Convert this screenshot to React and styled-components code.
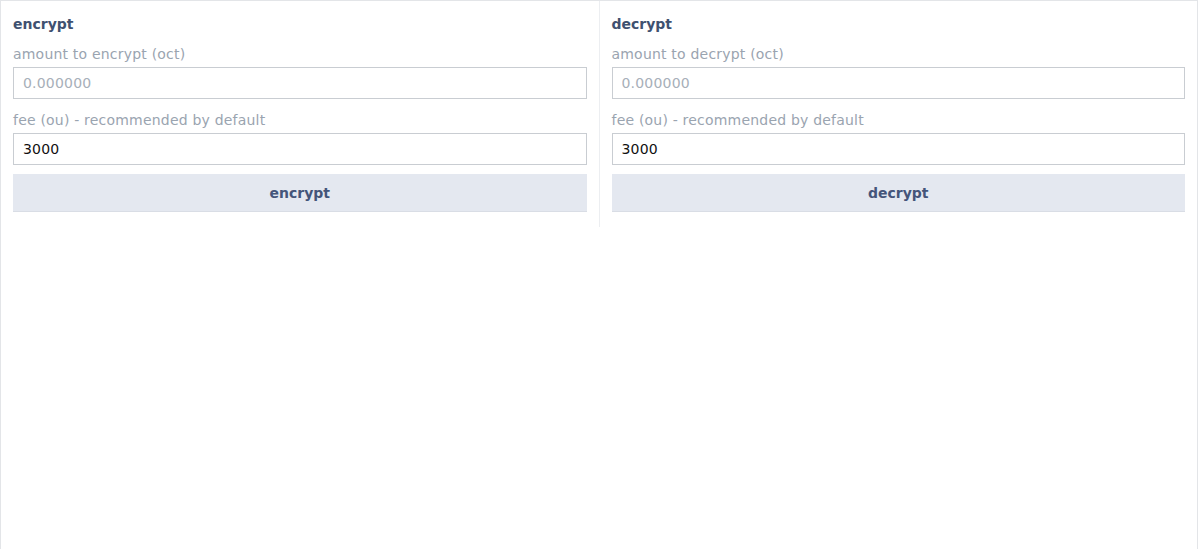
import React from 'react'
import styled, { createGlobalStyle } from 'styled-components'

const GlobalStyle = createGlobalStyle`
  html, body {
    margin: 0;
    padding: 0;
    background: #ffffff;
    font-family: 'DejaVu Sans', Verdana, sans-serif;
  }
  * { box-sizing: border-box; }
`

const Page = styled.div`
  height: 100vh;
  border: 1px solid #e3e5e8;
  border-bottom: none;
  display: flex;
  align-items: flex-start;
`

const Column = styled.section`
  flex: 1;
  padding: 13px 12px 15px 12px;
  border-right: ${(p) => (p.divider ? '1px solid #eceef1' : 'none')};
  display: flex;
  flex-direction: column;
`

const Title = styled.h3`
  margin: 1px 0 0 0;
  font-size: 14px;
  font-weight: bold;
  color: #3f5170;
  line-height: 18px;
`

const Label = styled.label`
  display: block;
  margin-top: 12px;
  font-size: 14px;
  letter-spacing: 0.2px;
  color: #9aa4b0;
  line-height: 18px;
`

const Input = styled.input`
  display: block;
  width: 100%;
  height: 32px;
  margin-top: 4px;
  padding: 0 9px;
  border: 1px solid #c9cdd2;
  border-radius: 0;
  font-family: 'DejaVu Sans', Verdana, sans-serif;
  font-size: 14px;
  letter-spacing: 0.2px;
  color: #111111;
  outline: none;
  &::placeholder { color: #a7afb9; }
`

const Button = styled.button`
  display: block;
  width: 100%;
  height: 38px;
  margin-top: 9px;
  border: none;
  border-bottom: 1px solid #d9dde5;
  background: #e4e8f0;
  font-family: 'DejaVu Sans', Verdana, sans-serif;
  font-size: 14px;
  font-weight: bold;
  color: #44557a;
  cursor: pointer;
`

function Panel({ action, divider }) {
  return (
    <Column divider={divider}>
      <Title>{action}</Title>
      <Label>amount to {action} (oct)</Label>
      <Input placeholder="0.000000" />
      <Label>fee (ou) - recommended by default</Label>
      <Input defaultValue="3000" />
      <Button>{action}</Button>
    </Column>
  )
}

export default function App() {
  return (
    <>
      <GlobalStyle />
      <Page>
        <Panel action="encrypt" divider />
        <Panel action="decrypt" />
      </Page>
    </>
  )
}
